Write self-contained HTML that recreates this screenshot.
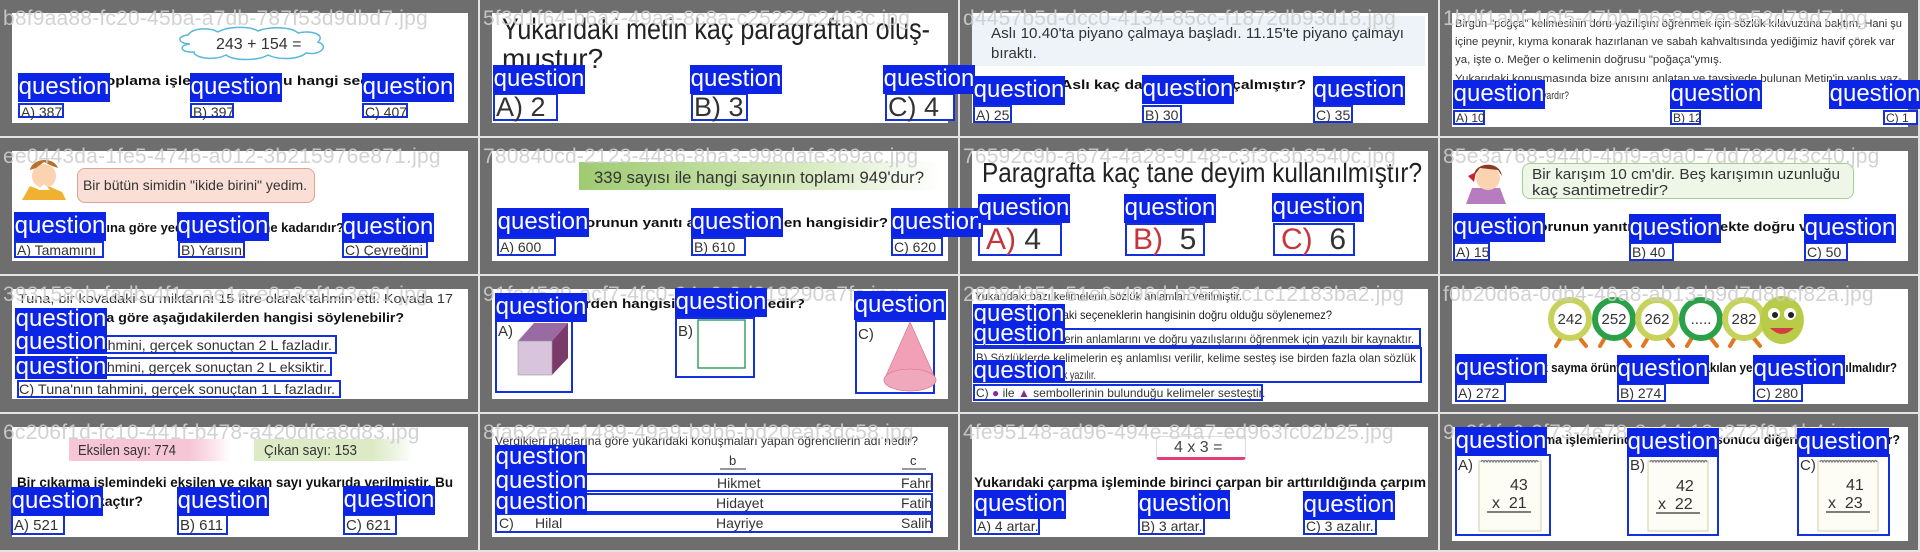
<!DOCTYPE html>
<html><head><meta charset="utf-8">
<style>
*{margin:0;padding:0}
body{width:1920px;height:552px;background:#e4e4e4;position:relative;overflow:hidden;font-family:"Liberation Sans",sans-serif}
.c{position:absolute;width:478px;height:136px;background:#6e6e6e}
.w{position:absolute;left:12px;top:13px;width:456px;height:110px;background:#fff}
.fn{position:absolute;left:3px;top:7px;font-size:21px;line-height:24px;color:rgba(205,205,205,0.9);white-space:nowrap;z-index:5;letter-spacing:0.2px}
.q{position:absolute;background:#0b24e6;color:#fff;font-size:24px;line-height:27px;width:92px;height:29px;z-index:10;text-align:center;overflow:hidden}
.a{position:absolute;border:2px solid #1430dc;font-size:14px;line-height:14px;color:#333;padding-left:1px;box-sizing:border-box;z-index:8;white-space:nowrap;background:#fff}
.s{position:absolute;overflow:visible}
.s text{font-family:"Liberation Sans",sans-serif}
</style></head><body>

<!-- ROW 0 -->
<div class="c" style="left:0;top:0">
 <div class="w"></div>
 <svg class="s" style="left:170px;top:26px" width="165" height="36"><path d="M20 18 C8 18 6 10 18 9 C22 2 40 1 48 6 C58 0 80 0 88 5 C100 0 122 1 128 7 C140 4 156 8 148 16 C160 20 150 30 136 27 C128 34 108 34 98 29 C88 35 64 35 56 29 C44 35 24 32 24 26 C10 27 8 19 20 18 Z" fill="#fff" stroke="#5ab8d8" stroke-width="1.5"/><text x="46" y="23" font-size="16" fill="#333">243 + 154 =</text></svg>
 <svg class="s" style="left:18px;top:72px" width="440" height="16"><text x="0" y="13" font-size="13" font-weight="bold" textLength="430" lengthAdjust="spacingAndGlyphs" fill="#111">Yukarıdaki toplama işleminin sonucu hangi seçenektedir?</text></svg>
 <div class="q" style="left:18px;top:73px">question</div><div class="q" style="left:190px;top:73px">question</div><div class="q" style="left:362px;top:73px">question</div>
 <div class="a" style="left:18px;top:103px;width:46px;height:15px">A) 387</div>
 <div class="a" style="left:190px;top:103px;width:44px;height:15px">B) 397</div>
 <div class="a" style="left:362px;top:103px;width:46px;height:15px">C) 407</div>
 <div class="fn">b8f9aa88-fc20-45ba-a7db-787f53d9dbd7.jpg</div>
</div>

<div class="c" style="left:480px;top:0">
 <div class="w"></div>
 <svg class="s" style="left:22px;top:10px" width="430" height="60"><text x="0" y="29" font-size="30" textLength="428" lengthAdjust="spacingAndGlyphs" fill="#222">Yukarıdaki metin kaç paragraftan oluş-</text><text x="0" y="58" font-size="28" fill="#222">muştur?</text></svg>
 <div class="q" style="left:13px;top:65px">question</div><div class="q" style="left:210px;top:65px">question</div><div class="q" style="left:403px;top:65px">question</div>
 <div class="a" style="left:13px;top:93px;width:65px;height:28px;font-size:27px;line-height:25px">A) 2</div>
 <div class="a" style="left:211px;top:93px;width:57px;height:28px;font-size:27px;line-height:25px">B) 3</div>
 <div class="a" style="left:405px;top:93px;width:70px;height:28px;font-size:27px;line-height:25px">C) 4</div>
 <div class="fn">5f3d1f64-b6a2-49aa-8c8a-c25222c2463c.jpg</div>
</div>

<div class="c" style="left:960px;top:0">
 <div class="w"></div>
 <div style="position:absolute;left:12px;top:16px;width:453px;height:50px;background:#edf3f9"></div>
 <svg class="s" style="left:31px;top:24px" width="420" height="40"><text x="0" y="14" font-size="15" textLength="413" lengthAdjust="spacingAndGlyphs" fill="#333">Aslı 10.40'ta piyano çalmaya başladı. 11.15'te piyano çalmayı</text><text x="0" y="34" font-size="15" fill="#333">bıraktı.</text></svg>
 <svg class="s" style="left:20px;top:77px" width="330" height="16"><text x="0" y="12" font-size="13" font-weight="bold" textLength="326" lengthAdjust="spacingAndGlyphs" fill="#111">Buna göre Aslı kaç dakika piyano çalmıştır?</text></svg>
 <div class="q" style="left:13px;top:76px">question</div><div class="q" style="left:182px;top:75px">question</div><div class="q" style="left:353px;top:76px">question</div>
 <div class="a" style="left:13px;top:105px;width:39px;height:18px;line-height:16px">A) 25</div>
 <div class="a" style="left:182px;top:105px;width:40px;height:18px;line-height:16px">B) 30</div>
 <div class="a" style="left:353px;top:105px;width:40px;height:18px;line-height:16px">C) 35</div>
 <div class="fn">d4457b5d-dcc0-4134-85cc-f1872db93d18.jpg</div>
</div>

<div class="c" style="left:1440px;top:0">
 <div class="w" style="height:114px"></div>
 <svg class="s" style="left:15px;top:16px" width="450" height="90"><g font-size="11" fill="#333"><text x="0" y="11" textLength="447" lengthAdjust="spacingAndGlyphs">Birgün "poğça" kelimesinin doru yazılışını öğrenmek için sözlük kılavuzuna baktım. Hani şu</text><text x="0" y="29" textLength="440" lengthAdjust="spacingAndGlyphs">içine peynir, kıyma konarak hazırlanan ve sabah kahvaltısında yediğimiz havif çörek var</text><text x="0" y="47" textLength="267" lengthAdjust="spacingAndGlyphs">ya, işte o. Meğer o kelimenin doğrusu "poğaça"ymış.</text><text x="0" y="66" textLength="447" lengthAdjust="spacingAndGlyphs">Yukarıdaki konuşmasında bize anısını anlatan ve tavsiyede bulunan Metin'in yanlış yaz-</text><text x="0" y="83" textLength="114" lengthAdjust="spacingAndGlyphs">dığı kelimede kaç harf vardır?</text></g></svg>
 <div class="q" style="left:13px;top:80px">question</div><div class="q" style="left:230px;top:80px">question</div><div class="q" style="left:389px;top:80px">question</div>
 <div class="a" style="left:13px;top:110px;width:32px;height:15px;font-size:12px;line-height:12px">A) 10</div>
 <div class="a" style="left:230px;top:110px;width:31px;height:15px;font-size:12px;line-height:12px">B) 12</div>
 <div class="a" style="left:443px;top:110px;width:35px;height:15px;font-size:12px;line-height:12px">C) 1</div>
 <div class="fn">1bdf1abf-16f5-47bb-b6c8-92e9e52d79d7.jpg</div>
</div>

<!-- ROW 1 -->
<div class="c" style="left:0;top:138px">
 <div class="w"></div>
 <svg class="s" style="left:18px;top:18px" width="52" height="46"><path d="M4 44 L12 30 L22 34 L30 30 L44 36 L48 44 Z" fill="#f0b030"/><circle cx="26" cy="20" r="12" fill="#fbd3b0"/><path d="M12 14 C14 2 36 0 40 12 L34 10 L26 6 L18 12 Z" fill="#b87030"/><path d="M20 34 L26 28 L32 34 Z" fill="#fff"/></svg>
 <div style="position:absolute;left:77px;top:30px;width:236px;height:33px;background:#f9dfd6;border:1px solid #dca493;border-radius:8px"></div>
 <svg class="s" style="left:83px;top:38px" width="230" height="20"><text x="0" y="14" font-size="14" textLength="224" lengthAdjust="spacingAndGlyphs" fill="#333">Bir bütün simidin "ikide birini" yedim.</text></svg>
 <svg class="s" style="left:14px;top:82px" width="340" height="16"><text x="0" y="12" font-size="13" font-weight="bold" textLength="330" lengthAdjust="spacingAndGlyphs" fill="#111">Simidin tamamına göre yediğim simidin ne kadarıdır?</text></svg>
 <div class="q" style="left:14px;top:74px">question</div><div class="q" style="left:177px;top:74px">question</div><div class="q" style="left:342px;top:75px">question</div>
 <div class="a" style="left:14px;top:103px;width:90px;height:17px;line-height:15px">A) Tamamını</div>
 <div class="a" style="left:178px;top:103px;width:67px;height:17px;line-height:15px">B) Yarısını</div>
 <div class="a" style="left:342px;top:103px;width:86px;height:17px;line-height:15px">C) Çeyreğini</div>
 <div class="fn">ee0443da-1fe5-4746-a012-3b215976e871.jpg</div>
</div>

<div class="c" style="left:480px;top:138px">
 <div class="w"></div>
 <div style="position:absolute;left:99px;top:24px;width:361px;height:28px;background:linear-gradient(90deg,#9fcb72,#cfe6b4 55%,#f4f9ee 90%,#fff)"></div>
 <svg class="s" style="left:114px;top:28px" width="340" height="22"><text x="0" y="17" font-size="17" textLength="330" lengthAdjust="spacingAndGlyphs" fill="#333">339 sayısı ile hangi sayının toplamı 949'dur?</text></svg>
 <svg class="s" style="left:17px;top:77px" width="400" height="16"><text x="0" y="12" font-size="13" font-weight="bold" textLength="391" lengthAdjust="spacingAndGlyphs" fill="#111">Yukarıdaki sorunun yanıtı aşağıdakilerden hangisidir?</text></svg>
 <div class="q" style="left:17px;top:70px">question</div><div class="q" style="left:211px;top:70px">question</div><div class="q" style="left:411px;top:70px">question</div>
 <div class="a" style="left:17px;top:99px;width:59px;height:19px;line-height:17px">A) 600</div>
 <div class="a" style="left:211px;top:99px;width:55px;height:19px;line-height:17px">B) 610</div>
 <div class="a" style="left:411px;top:99px;width:52px;height:19px;line-height:17px">C) 620</div>
 <div class="fn">780840cd-2123-4486-8ba3-998dafe369ac.jpg</div>
</div>

<div class="c" style="left:960px;top:138px">
 <div class="w"></div>
 <svg class="s" style="left:22px;top:18px" width="445" height="34"><text x="0" y="26" font-size="28" textLength="440" lengthAdjust="spacingAndGlyphs" fill="#222">Paragrafta kaç tane deyim kullanılmıştır?</text></svg>
 <div class="q" style="left:18px;top:56px">question</div><div class="q" style="left:164px;top:56px">question</div><div class="q" style="left:312px;top:55px">question</div>
 <div class="a" style="left:18px;top:85px;width:84px;height:33px;font-size:30px;line-height:30px;padding-left:6px"><span style="color:#c8343c">A)</span> 4</div>
 <div class="a" style="left:165px;top:85px;width:80px;height:33px;font-size:30px;line-height:30px;padding-left:6px"><span style="color:#c8343c">B)</span>&nbsp; 5</div>
 <div class="a" style="left:313px;top:85px;width:82px;height:33px;font-size:30px;line-height:30px;padding-left:6px"><span style="color:#c8343c">C)</span>&nbsp; 6</div>
 <div class="fn">76592c9b-a674-4a28-9148-c3f3c3b3540c.jpg</div>
</div>

<div class="c" style="left:1440px;top:138px">
 <div class="w"></div>
 <svg class="s" style="left:18px;top:20px" width="56" height="46"><path d="M8 46 L14 30 L42 30 L48 46 Z" fill="#b77cc0"/><circle cx="30" cy="20" r="12" fill="#fbd3b0"/><path d="M16 18 C16 4 42 2 44 18 L40 12 L22 10 Z" fill="#8a3a20"/><path d="M10 18 L18 14 L16 24 Z" fill="#d02030"/></svg>
 <div style="position:absolute;left:82px;top:25px;width:330px;height:34px;background:#eef7e7;border:1px solid #a5cf92;border-radius:8px"></div>
 <svg class="s" style="left:92px;top:26px" width="320" height="36"><text x="0" y="15" font-size="15" textLength="308" lengthAdjust="spacingAndGlyphs" fill="#333">Bir karışım 10 cm'dir. Beş karışımın uzunluğu</text><text x="0" y="31" font-size="15" textLength="136" lengthAdjust="spacingAndGlyphs" fill="#333">kaç santimetredir?</text></svg>
 <svg class="s" style="left:13px;top:81px" width="440" height="16"><text x="0" y="12" font-size="13" font-weight="bold" textLength="425" lengthAdjust="spacingAndGlyphs" fill="#111">Yukarıdaki sorunun yanıtı hangi seçenekte doğru verilmiştir?</text></svg>
 <div class="q" style="left:13px;top:75px">question</div><div class="q" style="left:189px;top:76px">question</div><div class="q" style="left:364px;top:76px">question</div>
 <div class="a" style="left:13px;top:104px;width:37px;height:19px;line-height:17px">A) 15</div>
 <div class="a" style="left:189px;top:104px;width:45px;height:19px;line-height:17px">B) 40</div>
 <div class="a" style="left:364px;top:104px;width:44px;height:19px;line-height:17px">C) 50</div>
 <div class="fn">85e3a768-9440-4bf9-a9a0-7dd782043c40.jpg</div>
</div>

<!-- ROW 2 -->
<div class="c" style="left:0;top:276px">
 <div class="w"></div>
 <svg class="s" style="left:18px;top:14px" width="440" height="40"><text x="0" y="13" font-size="13" textLength="435" lengthAdjust="spacingAndGlyphs" fill="#333">Tuna, bir kovadaki su miktarını 15 litre olarak tahmin etti. Kovada 17</text><text x="0" y="32" font-size="13" font-weight="bold" textLength="386" lengthAdjust="spacingAndGlyphs" fill="#111">L su olduğuna göre aşağıdakilerden hangisi söylenebilir?</text></svg>
 <div class="a" style="left:15px;top:59px;width:322px;height:19px"></div>
 <div class="a" style="left:15px;top:81px;width:317px;height:19px"></div>
 <div class="a" style="left:17px;top:104px;width:324px;height:18px"></div>
 <svg class="s" style="left:19px;top:60px;z-index:9" width="320" height="62"><g font-size="14" fill="#333"><text x="0" y="14" textLength="313" lengthAdjust="spacingAndGlyphs">A) Tuna'nın tahmini, gerçek sonuçtan 2 L fazladır.</text><text x="0" y="36" textLength="308" lengthAdjust="spacingAndGlyphs">B) Tuna'nın tahmini, gerçek sonuçtan 2 L eksiktir.</text><text x="0" y="58" textLength="316" lengthAdjust="spacingAndGlyphs">C) Tuna'nın tahmini, gerçek sonuçtan 1 L fazladır.</text></g></svg>
 <div class="q" style="left:15px;top:32px;height:24px;line-height:22px">question</div>
 <div class="q" style="left:15px;top:56px;height:22px;line-height:20px">question</div>
 <div class="q" style="left:15px;top:80px;height:23px;line-height:21px">question</div>
 <div class="fn">393158cb-fadb-4f1e-ae1e-e0a3ef123e61.jpg</div>
</div>

<div class="c" style="left:480px;top:276px">
 <div class="w"></div>
 <svg class="s" style="left:20px;top:20px" width="310" height="16"><text x="0" y="12" font-size="13" font-weight="bold" textLength="305" lengthAdjust="spacingAndGlyphs" fill="#111">Aşağıdakilerden hangisi kare şeklindedir?</text></svg>
 <div class="a" style="left:15px;top:44px;width:78px;height:73px;font-size:15px;line-height:20px">A)</div>
 <div class="a" style="left:195px;top:41px;width:80px;height:61px;font-size:15px;line-height:26px">B)</div>
 <div class="a" style="left:375px;top:44px;width:80px;height:74px;font-size:15px;line-height:26px">C)</div>
 <svg class="s" style="left:0;top:0;z-index:9" width="478" height="136"><path d="M38 65 L54 47 L88 47 L72 65 Z" fill="#9a6aa4"/><path d="M72 65 L88 47 L88 82 L72 99 Z" fill="#7a3a6a"/><rect x="38" y="65" width="34" height="34" fill="#d8c4dc" stroke="#999" stroke-width="0.6"/><rect x="218" y="44" width="47" height="48" fill="none" stroke="#3aa060" stroke-width="1.5"/><path d="M430 46 L404 104 A26 11 0 0 0 456 104 Z" fill="#f2a0b8" stroke="#d07088" stroke-width="0.6"/><ellipse cx="430" cy="104" rx="26" ry="11" fill="#f0a8bc" stroke="#d07088" stroke-width="0.6"/></svg>
 <div class="q" style="left:15px;top:17px">question</div><div class="q" style="left:195px;top:12px">question</div><div class="q" style="left:374px;top:15px">question</div>
 <div class="fn">91fa4529-acf7-4fc0-94a9-8d319290a7fc.jpg</div>
</div>

<div class="c" style="left:960px;top:276px">
 <div class="w" style="height:113px"></div>
 <svg class="s" style="left:15px;top:13px" width="380" height="36"><text x="0" y="11" font-size="11" textLength="267" lengthAdjust="spacingAndGlyphs" fill="#333">Yukarıdaki bazı kelimelerin sözlük anlamları verilmiştir.</text><text x="0" y="30" font-size="12" textLength="357" lengthAdjust="spacingAndGlyphs" fill="#222">Buna göre aşağıdaki seçeneklerin hangisinin doğru olduğu söylenemez?</text></svg>
 <div class="a" style="left:13px;top:52px;width:448px;height:19px"></div>
 <div class="a" style="left:13px;top:71px;width:449px;height:36px"></div>
 <div class="a" style="left:13px;top:108px;width:290px;height:17px"></div>
 <svg class="s" style="left:16px;top:55px;z-index:9" width="446" height="70"><g font-size="12" fill="#333"><text x="0" y="12" textLength="438" lengthAdjust="spacingAndGlyphs">A) Sözlük, kelimelerin anlamlarını ve doğru yazılışlarını öğrenmek için yazılı bir kaynaktır.</text><text x="0" y="31" textLength="440" lengthAdjust="spacingAndGlyphs">B) Sözlüklerde kelimelerin eş anlamlısı verilir, kelime sesteş ise birden fazla olan sözlük</text><text x="0" y="48" textLength="120" lengthAdjust="spacingAndGlyphs">anlamları sıra verilerek yazılır.</text><text x="0" y="66">C) <tspan fill="#8a2a9a">●</tspan> ile <tspan fill="#8a2a9a">▲</tspan> sembollerinin bulunduğu kelimeler sesteştir.</text></g></svg>
 <div class="q" style="left:13px;top:28px;height:21px;line-height:20px">question</div>
 <div class="q" style="left:13px;top:48px;height:20px;line-height:19px">question</div>
 <div class="q" style="left:13px;top:84px;height:22px;line-height:21px">question</div>
 <div class="fn">2808d951-51e0-496d-b85a-2c1c12183ba2.jpg</div>
</div>

<div class="c" style="left:1440px;top:276px">
 <div class="w" style="height:115px"></div>
 <svg class="s" style="left:0;top:0" width="478" height="136">
  <g stroke="#e07820" stroke-width="4" stroke-linecap="round"><path d="M122 60 L116 70 M138 60 L146 70 M166 60 L160 70 M182 60 L190 70 M209 60 L203 70 M225 60 L233 70 M253 60 L247 70 M269 60 L277 70 M296 60 L290 70 M312 60 L320 70"/></g>
  <g stroke-width="6"><circle cx="130" cy="43" r="19" fill="#fff" stroke="#c6d25a"/><circle cx="174" cy="43" r="19" fill="#fff" stroke="#2aa048"/><circle cx="217" cy="43" r="19" fill="#fff" stroke="#c6d25a"/><circle cx="261" cy="43" r="19" fill="#fff" stroke="#2aa048"/><circle cx="304" cy="43" r="19" fill="#fff" stroke="#c6d25a"/></g>
  <ellipse cx="342" cy="44" rx="22" ry="24" fill="#b8cc4a"/><circle cx="334" cy="38" r="6" fill="#fff"/><circle cx="350" cy="38" r="6" fill="#fff"/><circle cx="335" cy="39" r="3" fill="#222"/><circle cx="351" cy="39" r="3" fill="#222"/><path d="M330 52 Q342 64 354 52 Z" fill="#d04040"/>
  <g font-size="15" fill="#333" text-anchor="middle"><text x="130" y="48">242</text><text x="174" y="48">252</text><text x="217" y="48">262</text><text x="261" y="48">.....</text><text x="304" y="48">282</text></g>
  <text x="15" y="96" font-size="13" font-weight="bold" textLength="442" lengthAdjust="spacingAndGlyphs" fill="#111">Yukarıdaki ritmik sayma örüntüsünde boş bırakılan yere hangi sayı yazılmalıdır?</text>
 </svg>
 <div class="q" style="left:15px;top:78px">question</div><div class="q" style="left:177px;top:79px">question</div><div class="q" style="left:313px;top:79px">question</div>
 <div class="a" style="left:15px;top:107px;width:51px;height:19px;line-height:17px">A) 272</div>
 <div class="a" style="left:177px;top:107px;width:49px;height:19px;line-height:17px">B) 274</div>
 <div class="a" style="left:313px;top:107px;width:50px;height:19px;line-height:17px">C) 280</div>
 <div class="fn">f0b20d6a-0db4-46a8-ab13-b9d7d80cf82a.jpg</div>
</div>

<!-- ROW 3 -->
<div class="c" style="left:0;top:414px">
 <div class="w"></div>
 <div style="position:absolute;left:69px;top:25px;width:161px;height:22px;background:linear-gradient(90deg,#f6c6d6 75%,#fbe4ec 90%,#fff)"></div>
 <div style="position:absolute;left:254px;top:25px;width:159px;height:22px;background:linear-gradient(90deg,#dcebc6 75%,#eef5e4 90%,#fff)"></div>
 <svg class="s" style="left:0;top:0" width="478" height="136"><text x="78" y="41" font-size="15" fill="#333" textLength="98" lengthAdjust="spacingAndGlyphs">Eksilen sayı: 774</text><text x="264" y="41" font-size="15" fill="#333" textLength="93" lengthAdjust="spacingAndGlyphs">Çıkan sayı: 153</text><text x="17" y="73" font-size="14" font-weight="bold" textLength="436" lengthAdjust="spacingAndGlyphs" fill="#111">Bir çıkarma işlemindeki eksilen ve çıkan sayı yukarıda verilmiştir. Bu</text><text x="11" y="92" font-size="14" font-weight="bold" textLength="132" lengthAdjust="spacingAndGlyphs" fill="#111">işlemin farkı kaçtır?</text></svg>
 <div class="q" style="left:11px;top:73px">question</div><div class="q" style="left:177px;top:73px">question</div><div class="q" style="left:343px;top:72px">question</div>
 <div class="a" style="left:11px;top:100px;width:54px;height:21px;font-size:15px;line-height:19px">A) 521</div>
 <div class="a" style="left:177px;top:100px;width:51px;height:21px;font-size:15px;line-height:19px">B) 611</div>
 <div class="a" style="left:343px;top:100px;width:54px;height:21px;font-size:15px;line-height:19px">C) 621</div>
 <div class="fn">6c206f1d-fc10-441f-b478-a420dfca8d83.jpg</div>
</div>

<div class="c" style="left:480px;top:414px">
 <div class="w"></div>
 <svg class="s" style="left:0;top:0" width="478" height="136"><text x="15" y="31" font-size="12" textLength="423" lengthAdjust="spacingAndGlyphs" fill="#333">Verdikleri ipuçlarına göre yukarıdaki konuşmaları yapan öğrencilerin adı nedir?</text><text x="249" y="51" font-size="13" fill="#333">b</text><text x="430" y="51" font-size="13" fill="#333">c</text><path d="M240 55 H266 M422 55 H446" stroke="#333" stroke-width="1"/></svg>
 <div class="a" style="left:15px;top:59px;width:438px;height:19px"></div>
 <div class="a" style="left:15px;top:79px;width:438px;height:20px"></div>
 <div class="a" style="left:15px;top:99px;width:438px;height:20px"></div>
 <svg class="s" style="left:0;top:0;z-index:9" width="478" height="136"><g font-size="14" fill="#333"><text x="237" y="74">Hikmet</text><text x="421" y="74">Fahri</text><text x="236" y="94">Hidayet</text><text x="421" y="94">Fatih</text><text x="19" y="114">C)</text><text x="55" y="114">Hilal</text><text x="236" y="114">Hayriye</text><text x="421" y="114">Salih</text></g></svg>
 <div class="q" style="left:15px;top:31px;height:25px;line-height:24px">question</div>
 <div class="q" style="left:15px;top:56px;height:22px;line-height:21px">question</div>
 <div class="q" style="left:15px;top:77px;height:23px;line-height:22px">question</div>
 <div class="fn">8fa62ea4-1489-49a9-b9b6-bd20eaf3dc58.jpg</div>
</div>

<div class="c" style="left:960px;top:414px">
 <div class="w"></div>
 <div style="position:absolute;left:196px;top:22px;width:88px;height:20px;background:#fff;border:1px solid #ddd;border-bottom:3px solid #e0407a;border-radius:3px"></div>
 <svg class="s" style="left:0;top:0" width="478" height="136"><text x="214" y="38" font-size="16" fill="#444">4 x 3 =</text><text x="14" y="73" font-size="14" font-weight="bold" textLength="452" lengthAdjust="spacingAndGlyphs" fill="#111">Yukarıdaki çarpma işleminde birinci çarpan bir arttırıldığında çarpım</text></svg>
 <div class="q" style="left:14px;top:76px">question</div><div class="q" style="left:178px;top:76px">question</div><div class="q" style="left:343px;top:77px">question</div>
 <div class="a" style="left:14px;top:102px;width:66px;height:19px;line-height:17px">A) 4 artar.</div>
 <div class="a" style="left:178px;top:102px;width:67px;height:19px;line-height:17px">B) 3 artar.</div>
 <div class="a" style="left:343px;top:102px;width:74px;height:19px;line-height:17px">C) 3 azalır.</div>
 <div class="fn">4fe95148-ad96-494e-84a7-ed963fc02b25.jpg</div>
</div>

<div class="c" style="left:1440px;top:414px">
 <div class="w" style="height:114px"></div>
 <svg class="s" style="left:0;top:0" width="478" height="136"><text x="15" y="30" font-size="13" font-weight="bold" textLength="445" lengthAdjust="spacingAndGlyphs" fill="#111">Aşağıdaki çarpma işlemlerinden hangisinin sonucu diğerlerinden farklıdır?</text></svg>
 <div class="a" style="left:15px;top:40px;width:96px;height:82px;font-size:15px;line-height:20px">A)</div>
 <div class="a" style="left:187px;top:40px;width:92px;height:82px;font-size:15px;line-height:20px">B)</div>
 <div class="a" style="left:357px;top:40px;width:93px;height:82px;font-size:15px;line-height:20px">C)</div>
 <svg class="s" style="left:0;top:0;z-index:9" width="478" height="136">
  <g fill="#fdfdf6" stroke="#cfcfa8" stroke-width="1"><rect x="39" y="47" width="62" height="70"/><rect x="208" y="47" width="60" height="70"/><rect x="378" y="47" width="60" height="70"/></g>
  <g stroke="#777" stroke-width="1.2" fill="none"><path d="M41 48 q1.5 -3 3 0 q1.5 -3 3 0 q1.5 -3 3 0 q1.5 -3 3 0 q1.5 -3 3 0 q1.5 -3 3 0 q1.5 -3 3 0 q1.5 -3 3 0 q1.5 -3 3 0 q1.5 -3 3 0 q1.5 -3 3 0 q1.5 -3 3 0 q1.5 -3 3 0 q1.5 -3 3 0 q1.5 -3 3 0 q1.5 -3 3 0 q1.5 -3 3 0 q1.5 -3 3 0 q1.5 -3 3 0"/><path d="M210 48 q1.5 -3 3 0 q1.5 -3 3 0 q1.5 -3 3 0 q1.5 -3 3 0 q1.5 -3 3 0 q1.5 -3 3 0 q1.5 -3 3 0 q1.5 -3 3 0 q1.5 -3 3 0 q1.5 -3 3 0 q1.5 -3 3 0 q1.5 -3 3 0 q1.5 -3 3 0 q1.5 -3 3 0 q1.5 -3 3 0 q1.5 -3 3 0 q1.5 -3 3 0 q1.5 -3 3 0 q1.5 -3 3 0"/><path d="M380 48 q1.5 -3 3 0 q1.5 -3 3 0 q1.5 -3 3 0 q1.5 -3 3 0 q1.5 -3 3 0 q1.5 -3 3 0 q1.5 -3 3 0 q1.5 -3 3 0 q1.5 -3 3 0 q1.5 -3 3 0 q1.5 -3 3 0 q1.5 -3 3 0 q1.5 -3 3 0 q1.5 -3 3 0 q1.5 -3 3 0 q1.5 -3 3 0 q1.5 -3 3 0 q1.5 -3 3 0 q1.5 -3 3 0"/></g>
  <g font-size="16" fill="#333"><text x="70" y="76">43</text><text x="52" y="94">x&#160;&#160;21</text><text x="236" y="77">42</text><text x="218" y="95">x&#160;&#160;22</text><text x="406" y="76">41</text><text x="388" y="94">x&#160;&#160;23</text></g>
  <g stroke="#555" stroke-width="1.5"><path d="M47 98 H91 M216 99 H260 M386 98 H430"/></g>
 </svg>
 <div class="q" style="left:15px;top:13px">question</div><div class="q" style="left:187px;top:14px">question</div><div class="q" style="left:357px;top:14px">question</div>
 <div class="fn">9c2f1fc6-0f73-4e78-8a14-13c272f0a1b4.jpg</div>
</div>

</body></html>
